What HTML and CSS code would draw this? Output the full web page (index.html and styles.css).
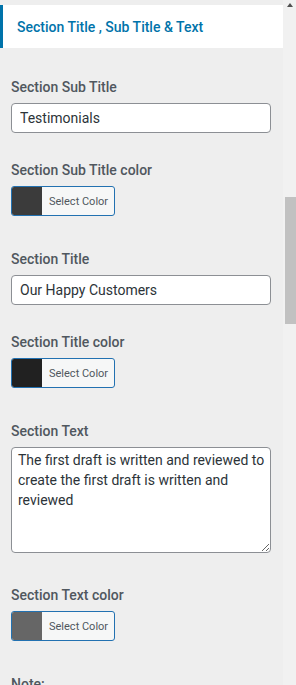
FILE: index.html
```html
<!DOCTYPE html>
<html lang="en">
<head>
    <meta charset="UTF-8">
    <meta name="viewport" content="width=device-width, initial-scale=1.0">
    <title>Customizer - Section Title</title>
    <link rel="stylesheet" href="styles.css">
</head>
<body>
    <div class="panel">
        <div class="section-header">
            <h3>Section Title , Sub Title &amp; Text</h3>
        </div>
        <div class="controls">
            <div class="control control-text">
                <label for="subTitle">Section Sub Title</label>
                <input type="text" id="subTitle" value="Testimonials">
            </div>
            <div class="control control-color">
                <span class="control-label">Section Sub Title color</span>
                <button class="color-btn">
                    <span class="swatch swatch-sub"></span>
                    <span class="color-text">Select Color</span>
                </button>
            </div>
            <div class="control control-text">
                <label for="title">Section Title</label>
                <input type="text" id="title" value="Our Happy Customers">
            </div>
            <div class="control control-color">
                <span class="control-label">Section Title color</span>
                <button class="color-btn">
                    <span class="swatch swatch-title"></span>
                    <span class="color-text">Select Color</span>
                </button>
            </div>
            <div class="control control-textarea">
                <label for="text">Section Text</label>
                <textarea id="text">The first draft is written and reviewed to create the first draft is written and reviewed</textarea>
            </div>
            <div class="control control-color">
                <span class="control-label">Section Text color</span>
                <button class="color-btn">
                    <span class="swatch swatch-text"></span>
                    <span class="color-text">Select Color</span>
                </button>
            </div>
            <div class="control">
                <span class="control-label">Note:</span>
            </div>
        </div>
    </div>
    <!-- fake scrollbar, page is shown scrolled -->
    <div class="scrollbar">
        <div class="scroll-arrow"></div>
        <div class="scroll-thumb"></div>
    </div>
</body>
</html>
```

FILE: styles.css
```css
:root {
    --bg: #eeeeee;
    --accent: #0073aa;
    --label: #50575e;
    --field-text: #2c3338;
    --field-border: #8c8f94;
}
html, body {
    margin: 0;
    padding: 0;
}
body {
    display: flex;
    height: 685px;
    overflow: hidden;
    background-color: var(--bg);
    font-family: Roboto, "Liberation Sans", Arial, sans-serif;
    font-size: 14px;
}
.panel {
    flex: 1;
    padding-top: 5px;
    min-width: 0;
}
.section-header {
    display: flex;
    align-items: center;
    height: 43px;
    background-color: #fff;
    border-left: 3px solid var(--accent);
    padding: 0 14px;
}
.section-header h3 {
    margin: 0;
    font-size: 14px;
    font-weight: 500;
    color: var(--accent);
}
.controls {
    padding: 29px 12px 0 11px;
}
.control label,
.control .control-label {
    display: block;
    line-height: 20px;
    margin-bottom: 6px;
    font-weight: 500;
    color: var(--label);
}
.control-text {
    margin-bottom: 27px;
}
.control-color {
    margin-bottom: 33px;
}
.control-textarea {
    margin-bottom: 32px;
}
.control input,
.control textarea {
    display: block;
    width: 100%;
    box-sizing: border-box;
    border: 1px solid var(--field-border);
    border-radius: 4px;
    background-color: #fff;
    color: var(--field-text);
    font-family: inherit;
    font-size: 14px;
    margin: 0;
}
.control input {
    height: 30px;
    padding: 0 8px;
}
.control textarea {
    height: 106px;
    padding: 2px 2px 2px 6px;
    line-height: 20px;
    resize: vertical;
}
.color-btn {
    display: flex;
    align-items: stretch;
    height: 30px;
    padding: 0;
    border: 1px solid #2271b1;
    border-radius: 3px;
    background-color: #f6f7f7;
    overflow: hidden;
    cursor: pointer;
    font-family: inherit;
}
.swatch {
    width: 30px;
}
.swatch-sub {
    background-color: #3b3b3b;
}
.swatch-title {
    background-color: #212121;
}
.swatch-text {
    background-color: #666666;
}
.color-text {
    display: flex;
    align-items: center;
    padding: 0 6px 0 7px;
    font-size: 11px;
    color: var(--label);
}
.scrollbar {
    width: 13px;
    background-color: #f1f1f1;
    flex-shrink: 0;
}
.scroll-arrow {
    width: 0;
    height: 0;
    margin: 3px auto 0;
    border-left: 3px solid transparent;
    border-right: 3px solid transparent;
    border-bottom: 4px solid #505050;
}
.scroll-thumb {
    margin: 190px 0 0 2px;
    height: 127px;
    background-color: #c1c1c1;
}
```
